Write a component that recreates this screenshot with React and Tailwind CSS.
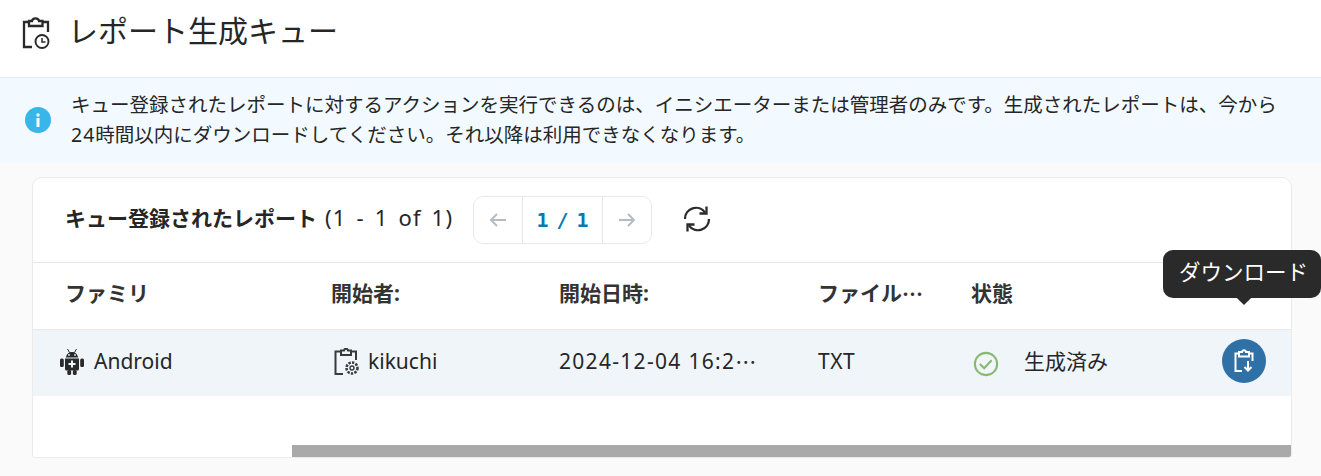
const font = { fontFamily: '"Noto Sans", "Noto Sans CJK JP", sans-serif' };

function Android() {
  return (
    <svg width="26" height="28" viewBox="0 0 26 28" fill="#2a2a2a">
      <path d="M7 9.500C7.300 6 10 4 13 4s5.700 2 6 5.500Z" />
      <path d="M8.500 1l2 3.500M17.500 1l-2 3.500" stroke="#2a2a2a" strokeWidth="1" />
      <path fillRule="evenodd" d="M6 10.500h14V21a1.500 1.500 0 0 1-1.500 1.500H7.500A1.500 1.500 0 0 1 6 21ZM12 12.500v2.500H9.500v2H12v2.500h2V17h2.500v-2H14v-2.500Z" />
      <rect x="1" y="10.500" width="3.800" height="8.500" rx="1.500" />
      <rect x="21.200" y="10.500" width="3.800" height="8.500" rx="1.500" />
      <rect x="8.300" y="22" width="3.800" height="5" rx="1.500" />
      <rect x="13.900" y="22" width="3.800" height="5" rx="1.500" />
      <circle cx="10" cy="7" r="0.900" fill="#f0f5fa" />
      <circle cx="16" cy="7" r="0.900" fill="#f0f5fa" />
    </svg>
  );
}

function Cell({ w, children, cls = '' }) {
  return <div className={`${w} shrink-0 flex items-center min-w-0 whitespace-nowrap ${cls}`}>{children}</div>;
}

function Dots() {
  return <span style={{ fontFamily: '"Noto Sans CJK JP", sans-serif' }}>…</span>;
}

export default function App() {
  return (
    <div style={font} className="w-[1321px] h-[476px] overflow-hidden relative bg-[#fafafa] text-[#262626]">
      <header className="h-[78px] bg-white border-b border-[#e8ebee] flex items-start pl-[18px] pt-[11px]">
        <svg width="36" height="38" viewBox="0 0 36 38" fill="none" stroke="#2a2a2a" strokeWidth="2.300" className="mt-[2px]">
          <path d="M10 9H6V34H14" />
          <path d="M25 9h5v10" />
          <path d="M11 13V8h3c.5-3.500 6.500-3.500 7 0h3.500v5Z" fill="white" />
          <circle cx="24" cy="28.500" r="6.500" strokeWidth="1.900" />
          <path d="M24 25V29H27.500" strokeWidth="1.500" />
        </svg>
        <h1 className="ml-[14px] text-[30px] leading-[40px] font-normal">レポート生成キュー</h1>
      </header>

      <div className="h-[84px] bg-[#f2faff] flex items-center pl-[25px]">
        <div className="w-[26px] h-[26px] rounded-full bg-[#38b6ea] flex items-center justify-center shrink-0">
          <svg width="6" height="14" viewBox="0 0 6 14" fill="white">
            <circle cx="3" cy="2" r="1.700" />
            <rect x="1.500" y="5" width="3" height="9" rx="0.500" />
          </svg>
        </div>
        <p className="ml-[20px] w-[1225px] text-[19.500px] leading-[30px] -mt-[1px]">
          キュー登録されたレポートに対するアクションを実行できるのは、イニシエーターまたは管理者のみです。生成されたレポートは、今から<br />
          <span className="tracking-[1px]">24</span>時間以内にダウンロードしてください。それ以降は利用できなくなります。
        </p>
      </div>

      <div className="ml-[32px] mt-[15px] w-[1260px] h-[281px] bg-white border border-[#ebebeb] rounded-t-[10px] rounded-b-[3px] overflow-hidden flex flex-col">
        <div className="h-[85px] shrink-0 border-b border-[#e8e8e8] flex items-center pl-[32px]">
          <div className="text-[21px] whitespace-nowrap w-[408px] -mt-[5px]">
            <span className="font-bold">キュー登録されたレポート</span>
            <span className="ml-[8px] text-[22px] tracking-[1.200px] [word-spacing:3px]">(1 - 1 of 1)</span>
          </div>
          <div className="h-[48px] w-[179px] rounded-[10px] border border-[#e6e8ea] flex items-center -mt-[1px]">
            <div className="w-[49px] h-full flex items-center justify-center border-r border-[#e6e8ea] text-[#b4bcc2]">
              <svg width="18" height="16" viewBox="0 0 18 16" fill="none" stroke="currentColor" strokeWidth="2"><path d="M17 8H2M8 2 2 8l6 6" /></svg>
            </div>
            <div style={{ fontFamily: '"DejaVu Sans Mono", monospace' }} className="w-[80px] h-full flex items-center justify-center border-r border-[#e6e8ea] text-[#0a78b0] font-bold text-[20px] [word-spacing:-4px] whitespace-nowrap">1 / 1</div>
            <div className="flex-1 h-full flex items-center justify-center text-[#b4bcc2]">
              <svg width="18" height="16" viewBox="0 0 18 16" fill="none" stroke="currentColor" strokeWidth="2"><path d="M1 8h15M10 2l6 6-6 6" /></svg>
            </div>
          </div>
          <svg width="30" height="30" viewBox="0 0 30 30" fill="none" stroke="#2a2a2a" strokeWidth="2.300" className="ml-[30px] -mt-[3px]">
            <path d="M3 15A11 11 0 0 1 23 8.500" />
            <path d="M27 15A11 11 0 0 1 7 21.500" />
            <path d="M24.500 2.500V9.500H17.500M5.500 27.500V20.500H12.500" />
          </svg>
        </div>

        <div className="h-[67px] shrink-0 border-b border-[#e8e8e8] flex items-center text-[21px] font-bold text-[#333] pb-[5px]">
          <Cell w="w-[298px]" cls="pl-[32px]">ファミリ</Cell>
          <Cell w="w-[228px]">開始者:</Cell>
          <Cell w="w-[259px]">開始日時:</Cell>
          <Cell w="w-[153px]">ファイル<Dots /></Cell>
          <Cell w="w-[200px]">状態</Cell>
        </div>

        <div className="h-[66px] shrink-0 bg-[#f0f5fa] flex items-center text-[21px] pb-[3px]">
          <Cell w="w-[298px]" cls="pl-[26px]">
            <Android />
            <span className="ml-[9px]">Android</span>
          </Cell>
          <Cell w="w-[228px]" cls="pl-[3px]">
            <svg width="26" height="28" viewBox="0 0 26 28" fill="none" stroke="#3a3a3a" strokeWidth="2">
              <path d="M6 3.500H1.500V26H9" />
              <path d="M17 3.500h5V12" />
              <path d="M7 7V2.500h3c.5-2.500 3.500-2.500 4 0h3V7Z" />
              <circle cx="18" cy="20" r="2" strokeWidth="1.400" />
              <circle cx="18" cy="20" r="5.500" strokeWidth="2.500" strokeDasharray="2.400 1.200" />
            </svg>
            <span className="ml-[8px]">kikuchi</span>
          </Cell>
          <Cell w="w-[259px]"><span className="tracking-[1.300px]">2024-12-04 16:2</span><Dots /></Cell>
          <Cell w="w-[153px]"><span className="tracking-[0.500px]">TXT</span></Cell>
          <Cell w="w-[251px]" cls="pl-[2px]">
            <svg width="26" height="26" viewBox="0 0 28 28" fill="none" stroke="#85b96f" strokeWidth="2.200" className="mt-[4px]">
              <circle cx="14" cy="14" r="12" />
              <path d="M7.500 14 12 18.500 20 10" />
            </svg>
            <span className="ml-[25px]">生成済み</span>
          </Cell>
          <div className="w-[44px] h-[44px] rounded-full bg-[#2f70a6] flex items-center justify-center shrink-0 -mt-[1px]">
            <svg width="28" height="28" viewBox="0 0 28 28" fill="none" stroke="white" strokeWidth="2">
              <path d="M8 6.500H5.500V24H12" />
              <path d="M20 6.500h2.500V14" />
              <path d="M9 9.500V5h3c.4-2.500 3.600-2.500 4 0h3v4.500Z" />
              <path d="M18 14v9M14.500 20l3.500 3.500 3.500-3.500" />
            </svg>
          </div>
        </div>

        <div className="flex-1 flex items-end">
          <div className="ml-[259px] flex-1 h-[12px] bg-[#a9a9a9]" />
        </div>
      </div>

      <div className="absolute left-[1163px] top-[250px] w-[158px] h-[48px] bg-[#2a2a2a] rounded-[10px] text-white text-[21.500px] flex items-center pl-[16px] pb-[3px] whitespace-nowrap">
        ダウンロード
        <div className="absolute left-[76px] top-[43px] w-[10px] h-[10px] bg-[#2a2a2a] rotate-45" />
      </div>
    </div>
  );
}
